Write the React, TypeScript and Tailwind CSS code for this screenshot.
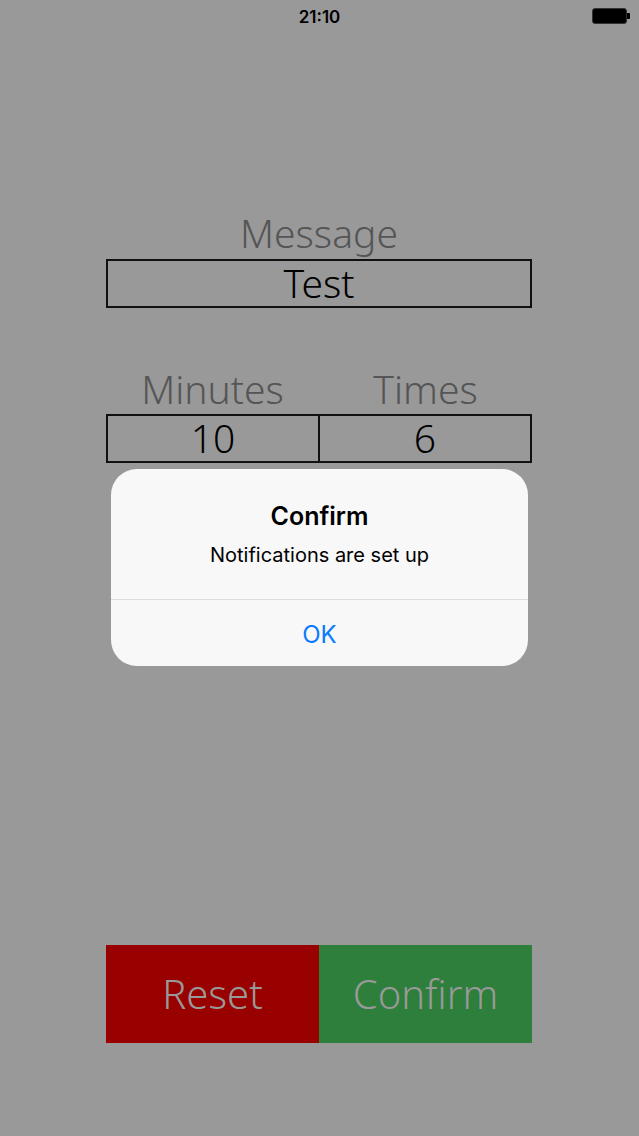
import React from 'react';

const jp = { fontFamily: '"Noto Sans", "Noto Sans CJK JP", sans-serif' };
const sf = { fontFamily: 'Inter, Roboto, "Noto Sans", sans-serif' };

const StatusBar: React.FC = () => (
  <div className="relative h-[32px] flex items-center justify-center">
    <span className="mt-[4px] text-[17px] font-semibold text-black" style={sf}>
      21:10
    </span>
    <div className="absolute right-[9px] top-[8px] flex items-center">
      <div className="w-[35px] h-[16px] rounded-[3px] bg-black border border-[#333]" />
      <div className="w-[3px] h-[6px] bg-black rounded-r-[1px]" />
    </div>
  </div>
);

const Label: React.FC<{ text: string }> = ({ text }) => (
  <div className="flex-1 text-center text-[39px] leading-[40px] font-light text-[#555555]" style={jp}>
    {text}
  </div>
);

const App: React.FC = () => {
  return (
    <div className="relative w-[639px] h-[1136px] bg-[#999999] overflow-hidden">
      <StatusBar />

      <div className="w-[426px] ml-[106px] flex flex-col">
        {/* Message */}
        <div className="mt-[181px] mb-[6px] flex">
          <Label text="Message" />
        </div>
        <div className="h-[49px] border-2 border-[#111] flex items-center justify-center text-[39px] font-light text-black" style={jp}>
          Test
        </div>

        {/* Minutes / Times */}
        <div className="mt-[61px] mb-[5px] flex">
          <Label text="Minutes" />
          <Label text="Times" />
        </div>
        <div className="h-[49px] border-2 border-[#111] flex text-[39px] font-light text-black" style={jp}>
          <div className="flex-1 flex items-center justify-center border-r-2 border-[#111]">10</div>
          <div className="flex-1 flex items-center justify-center">6</div>
        </div>

        {/* Action buttons */}
        <div className="mt-[482px] h-[98px] flex text-[40px] font-light text-[#999999]" style={jp}>
          <button className="flex-1 bg-[#990000] flex items-center justify-center">Reset</button>
          <button className="flex-1 bg-[#2e7f3b] flex items-center justify-center">Confirm</button>
        </div>
      </div>

      {/* Alert */}
      <div className="absolute left-[111px] top-[469px] w-[417px] rounded-[26px] bg-[#f8f8f8] overflow-hidden" style={sf}>
        <div className="h-[130px] flex flex-col items-center pt-[31px]">
          <div className="text-[25px] font-semibold text-black leading-[32px]">Confirm</div>
          <div className="mt-[10px] text-[20px] text-black leading-[26px]">Notifications are set up</div>
        </div>
        <div className="h-px bg-[#dcdcdc]" />
        <div className="h-[66px] pt-[4px] flex items-center justify-center text-[24px] text-[#0a7aff]">OK</div>
      </div>
    </div>
  );
};

export default App;
